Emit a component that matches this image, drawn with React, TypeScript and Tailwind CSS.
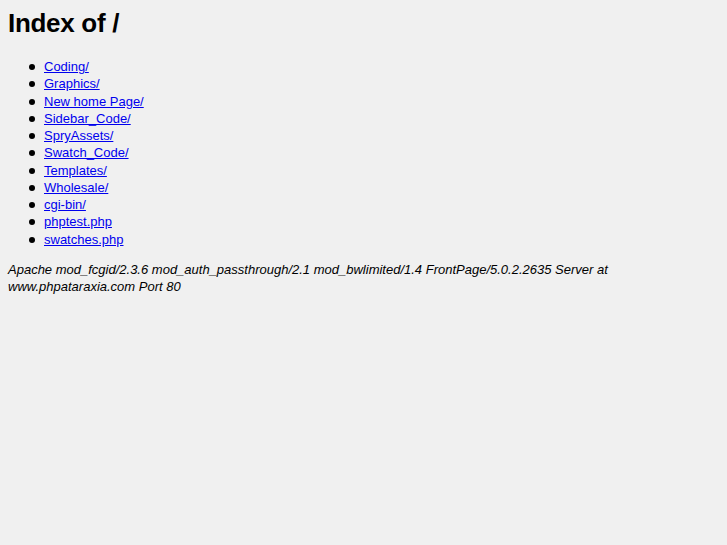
import React from 'react';

const entries = [
  'Coding/',
  'Graphics/',
  'New home Page/',
  'Sidebar_Code/',
  'SpryAssets/',
  'Swatch_Code/',
  'Templates/',
  'Wholesale/',
  'cgi-bin/',
  'phptest.php',
  'swatches.php',
];

export default function App() {
  return (
    <div className="min-h-[545px] bg-[#f0f0f0] p-2 text-black font-['Liberation_Sans',Arial,sans-serif] text-[13px] leading-[17.25px]">
      <h1 className="text-[26px] font-bold leading-[30px] m-0 tracking-[-0.3px]">Index of /</h1>
      <ul className="list-none pl-[36px] mt-[20px] mb-[13px]">
        {entries.map(name => (
          <li
            key={name}
            className="relative before:content-[''] before:absolute before:left-[-15px] before:top-[6px] before:w-[6px] before:h-[6px] before:rounded-full before:bg-black"
          >
            <a href="#" className="text-[#0000ee] underline">
              {name}
            </a>
          </li>
        ))}
      </ul>
      <address className="italic">
        Apache mod_fcgid/2.3.6 mod_auth_passthrough/2.1 mod_bwlimited/1.4 FrontPage/5.0.2.2635 Server at www.phpataraxia.com Port 80
      </address>
    </div>
  );
}
